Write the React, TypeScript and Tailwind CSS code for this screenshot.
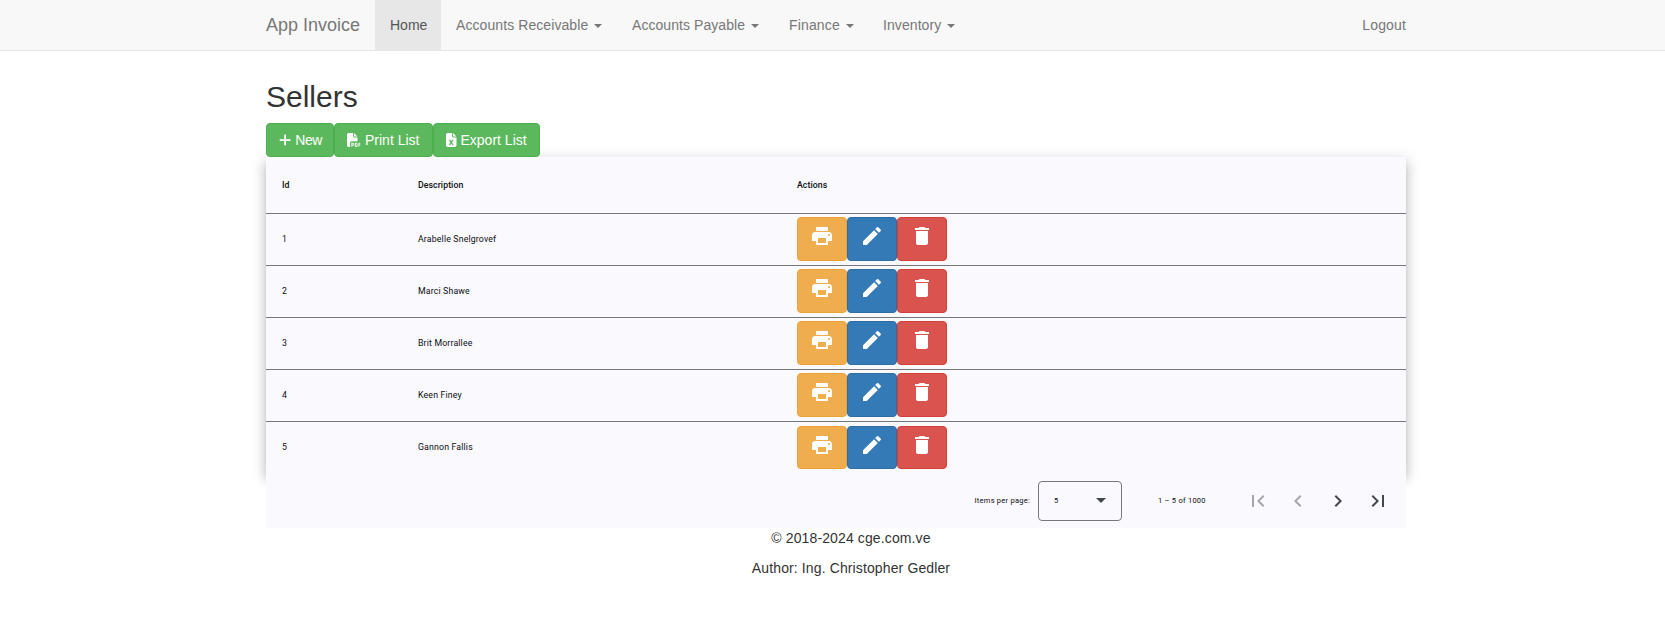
import React from "react";
import { MdPrint, MdEdit, MdDelete, MdFirstPage, MdChevronLeft, MdChevronRight, MdLastPage } from "react-icons/md";
import { FaPlus, FaFilePdf, FaFileExcel } from "react-icons/fa6";

const menus = [
  { name: "Accounts Receivable", size: "w-[176px] tracking-[0.08px]" },
  { name: "Accounts Payable", size: "w-[157px] tracking-[0.06px]" },
  { name: "Finance", size: "w-[94px] tracking-[0.15px]" },
  { name: "Inventory", size: "w-[103px] tracking-[0.08px]" },
];

const sellers = [
  { id: 1, description: "Arabelle Snelgrovef" },
  { id: 2, description: "Marci Shawe" },
  { id: 3, description: "Brit Morrallee" },
  { id: 4, description: "Keen Finey" },
  { id: 5, description: "Gannon Fallis" },
];

function Navbar() {
  return (
    <nav className="h-[51px] border-b border-[#e7e7e7] bg-[#f8f8f8]">
      <div className="ml-[266px] flex h-[50px] w-[1140px] leading-5 whitespace-nowrap text-[#777]">
        <a className="w-[109px] py-[15px] text-[18px]">App Invoice</a>
        <a className="w-[66px] bg-[#e7e7e7] py-[15px] pl-[15px] text-[#555]">Home</a>
        {menus.map((menu) => (
          <a key={menu.name} className={"py-[15px] pl-[15px] " + menu.size}>
            {menu.name}{" "}
            <span className="ml-0.5 inline-block h-0 w-0 border-x-4 border-t-4 border-x-transparent border-t-[#777] align-middle" />
          </a>
        ))}
        <a className="ml-auto py-[15px] tracking-[0.15px]">Logout</a>
      </div>
    </nav>
  );
}

function ToolButton({ icon, label, size }: { icon: React.ReactNode; label: string; size: string }) {
  return (
    <button className={"flex h-[34px] items-center gap-1 rounded-[4px] border border-[#4cae4c] bg-[#5cb85c] pl-3 leading-5 whitespace-nowrap text-white " + size}>
      {icon}
      <span>{label}</span>
    </button>
  );
}

function ActionButton({ icon, tone }: { icon: React.ReactNode; tone: string }) {
  return (
    <button className={"flex w-[50px] justify-center rounded-[4px] border pt-1.5 text-2xl text-white " + tone}>
      {icon}
    </button>
  );
}

function SellersTable() {
  const grid = "grid grid-cols-[136px_379px_1fr] pl-4 pr-4";
  return (
    <div className="h-[315px] bg-[#faf9fd] font-[Roboto,sans-serif] text-[8.75px] tracking-[0.16px] text-[#0c0d10] shadow-[0_5px_5px_-3px_rgba(0,0,0,0.2),0_8px_10px_1px_rgba(0,0,0,0.14),0_3px_14px_2px_rgba(0,0,0,0.12)]">
      <div className={grid + " h-[57px] items-center border-b border-[#74777f] font-medium tracking-[0.06px]"}>
        <span>Id</span>
        <span>Description</span>
        <span>Actions</span>
      </div>
      {sellers.map((s) => (
        <div key={s.id} className={grid + " group h-[52px] border-b border-[#74777f] last:border-b-0"}>
          <span className="pt-[15px]">{s.id}</span>
          <span className="pt-[15px]">{s.description}</span>
          <span className="mt-[3px] flex h-11 group-last:mt-1 group-last:h-[43px]">
            <ActionButton tone="bg-[#f0ad4e] border-[#eea236]" icon={<MdPrint />} />
            <ActionButton tone="bg-[#337ab7] border-[#2e6da4]" icon={<MdEdit />} />
            <ActionButton tone="bg-[#d9534f] border-[#d43f3a]" icon={<MdDelete />} />
          </span>
        </div>
      ))}
    </div>
  );
}

function Paginator() {
  return (
    <div className="relative flex h-14 items-center justify-end bg-[#faf9fd] pt-px pr-2 font-[Roboto,sans-serif] text-[7.5px] tracking-[0.25px] text-[#0c0d10]">
      <span>Items per page:</span>
      <div className="ml-2 flex h-10 w-[84px] items-center justify-between rounded-[4px] border border-[#74777f] pr-[15px] pl-[15px]">
        <span>5</span>
        <span className="h-0 w-0 border-x-5 border-t-5 border-x-transparent border-t-[#44474e]" />
      </div>
      <span className="mr-8 ml-9 w-[48px] whitespace-nowrap">1 – 5 of 1000</span>
      <div className="flex text-2xl text-[#44474e]">
        <span className="flex size-10 items-center justify-center text-[#a6a7ab]"><MdFirstPage /></span>
        <span className="flex size-10 items-center justify-center text-[#a6a7ab]"><MdChevronLeft /></span>
        <span className="flex size-10 items-center justify-center"><MdChevronRight /></span>
        <span className="flex size-10 items-center justify-center"><MdLastPage /></span>
      </div>
    </div>
  );
}

export default function App() {
  return (
    <div className="min-h-[627px] bg-white font-['Liberation_Sans',Arial,sans-serif] text-sm leading-5 text-[#333]">
      <Navbar />
      <main className="ml-[266px] w-[1140px]">
        <h2 className="pt-[29px] pb-[10px] text-[30px] leading-[33px]">Sellers</h2>
        <div className="relative z-10 flex">
          <ToolButton size="w-[68px] tracking-[-0.4px]" icon={<FaPlus className="w-[12.25px]" />} label="New" />
          <ToolButton size="w-[99px]" icon={<FaFilePdf />} label="Print List" />
          <ToolButton size="w-[107px]" icon={<FaFileExcel className="w-[10.5px]" />} label="Export List" />
        </div>
        <SellersTable />
        <Paginator />
      </main>
      <footer className="ml-[266px] w-[1170px] text-center tracking-[0.12px]">
        <p className="mb-2.5">© 2018-2024 cge.com.ve</p>
        <p>Author: Ing. Christopher Gedler</p>
      </footer>
    </div>
  );
}
